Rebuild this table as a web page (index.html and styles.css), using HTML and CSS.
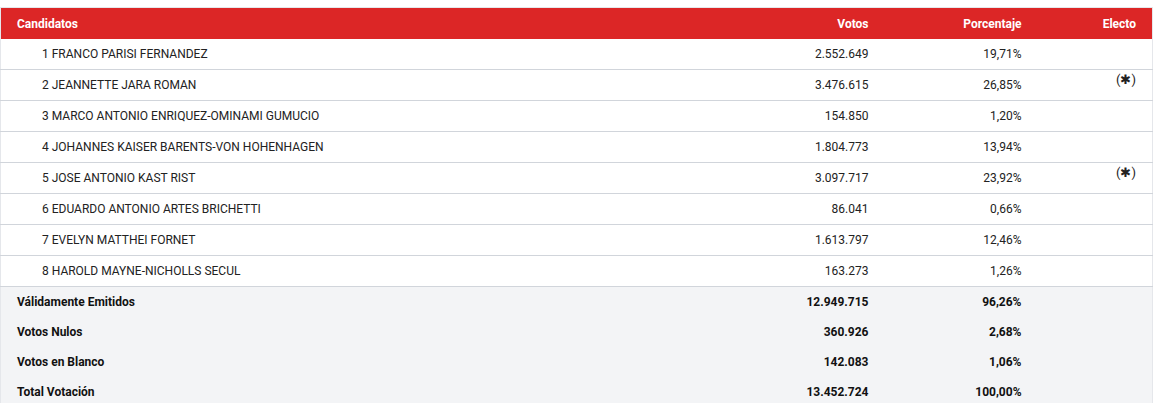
FILE: index.html
```html
<!DOCTYPE html>
<html lang="es">
<head>
<meta charset="utf-8">
<link rel="stylesheet" href="styles.css">
</head>
<body>
<table class="results">
  <colgroup>
    <col class="c-name">
    <col class="c-votes">
    <col class="c-pct">
    <col class="c-elect">
  </colgroup>
  <thead>
    <tr>
      <th class="left">Candidatos</th>
      <th>Votos</th>
      <th>Porcentaje</th>
      <th>Electo</th>
    </tr>
  </thead>
  <tbody>
    <tr><td class="name">1 FRANCO PARISI FERNANDEZ</td><td>2.552.649</td><td>19,71%</td><td></td></tr>
    <tr><td class="name">2 JEANNETTE JARA ROMAN</td><td>3.476.615</td><td>26,85%</td><td><span class="mark">(✱)</span></td></tr>
    <tr><td class="name">3 MARCO ANTONIO ENRIQUEZ-OMINAMI GUMUCIO</td><td>154.850</td><td>1,20%</td><td></td></tr>
    <tr><td class="name">4 JOHANNES KAISER BARENTS-VON HOHENHAGEN</td><td>1.804.773</td><td>13,94%</td><td></td></tr>
    <tr><td class="name">5 JOSE ANTONIO KAST RIST</td><td>3.097.717</td><td>23,92%</td><td><span class="mark">(✱)</span></td></tr>
    <tr><td class="name">6 EDUARDO ANTONIO ARTES BRICHETTI</td><td>86.041</td><td>0,66%</td><td></td></tr>
    <tr><td class="name">7 EVELYN MATTHEI FORNET</td><td>1.613.797</td><td>12,46%</td><td></td></tr>
    <tr><td class="name">8 HAROLD MAYNE-NICHOLLS SECUL</td><td>163.273</td><td>1,26%</td><td></td></tr>
  </tbody>
  <tfoot>
    <tr><td class="left">Válidamente Emitidos</td><td>12.949.715</td><td>96,26%</td><td></td></tr>
    <tr><td class="left">Votos Nulos</td><td>360.926</td><td>2,68%</td><td></td></tr>
    <tr><td class="left">Votos en Blanco</td><td>142.083</td><td>1,06%</td><td></td></tr>
    <tr><td class="left">Total Votación</td><td>13.452.724</td><td>100,00%</td><td></td></tr>
  </tfoot>
</table>
</body>
</html>
```
FILE: styles.css
```css
html, body {
  margin: 0;
  padding: 0;
  background: #fff;
}
body {
  padding-top: 7px;
  font-family: Roboto, "Liberation Sans", Arial, sans-serif;
  font-size: 12px;
  color: #222;
}
.results {
  width: 1152px;
  border-collapse: collapse;
  border: 1px solid #e5e7eb;
  table-layout: fixed;
}
.c-name { width: 732px; }
.c-votes { width: 152px; }
.c-pct { width: 153px; }
.c-elect { width: 115px; }

.results th {
  background: #dc2626;
  color: #fff;
  font-weight: 700;
  height: 31px;
  padding: 0 16px;
  text-align: right;
  vertical-align: middle;
}
.results th.left, .results td.left { text-align: left; }

.results tbody td {
  height: 30px;
  padding: 0 16px;
  text-align: right;
  border-bottom: 1px solid #d1d5db;
  vertical-align: middle;
  background: #fff;
}
.results tbody td.name {
  text-align: left;
  padding-left: 41px;
}
.results tfoot td {
  height: 30px;
  padding: 0 16px;
  text-align: right;
  background: #f3f4f6;
  font-weight: 700;
  color: #111;
  vertical-align: middle;
}
.mark {
  position: relative;
  top: -6px;
  font-size: 13px;
  color: #222;
}
```
